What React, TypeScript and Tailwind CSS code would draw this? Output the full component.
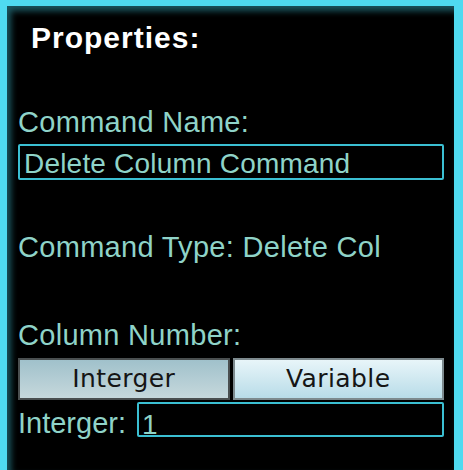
import React from "react";

export default function App() {
  const label = "text-[29px] leading-[29px] text-[#8fd3c8] tracking-[0.3px]";
  return (
    <div
      className="w-[463px] h-[470px] bg-black border-l-[7px] border-t-[6px] border-r-[9px] border-[#4fdaf0] shadow-[inset_4px_5px_6px_rgba(60,190,210,0.45)] overflow-hidden"
      style={{ fontFamily: '"Liberation Sans", Arial, sans-serif' }}
    >
      <div className="flex flex-col pl-[11px] pr-[10px] pt-[17px]">
        <div className="pl-[13px] text-[30px] leading-[30px] font-bold text-white tracking-[1px]">
          Properties:
        </div>
        <div className={`${label} mt-[55px]`}>Command Name:</div>
        <div className="mt-[7px] h-[36px] border-2 border-[#3bbfd2] rounded-[2px] pl-[4px] pt-[3px] text-[28px] leading-[29px] text-[#8fd3c8] tracking-[0.2px]">
          Delete Column Command
        </div>
        <div className={`${label} mt-[53px]`}>Command Type: Delete Col</div>
        <div className={`${label} mt-[59px]`}>Column Number:</div>
        <div
          className="mt-[8px] grid grid-cols-2 gap-[3px] h-[36px]"
          style={{ fontFamily: '"DejaVu Sans", Verdana, sans-serif' }}
        >
          <div className="flex items-center justify-center border-2 border-[#4a4f50] bg-gradient-to-b from-[#a0c1cb] to-[#c6d8dc] text-[25px] text-[#151515] tracking-[0.4px]">
            Interger
          </div>
          <div className="flex items-center justify-center border-2 border-[#7d8a8e] bg-gradient-to-b from-[#e8f5f9] to-[#b8dce8] text-[25px] text-[#151515] tracking-[0.4px]">
            Variable
          </div>
        </div>
        <div className="mt-[8px] flex items-start">
          <div className={`${label} mt-[7px] shrink-0 tracking-[0px]`}>Interger:</div>
          <div className="ml-[11px] flex-1 h-[35px] border-2 border-[#3bbfd2] rounded-[2px] pl-[3px] pt-[6px] text-[28px] leading-[29px] text-[#8fd3c8]">
            1
          </div>
        </div>
      </div>
    </div>
  );
}
